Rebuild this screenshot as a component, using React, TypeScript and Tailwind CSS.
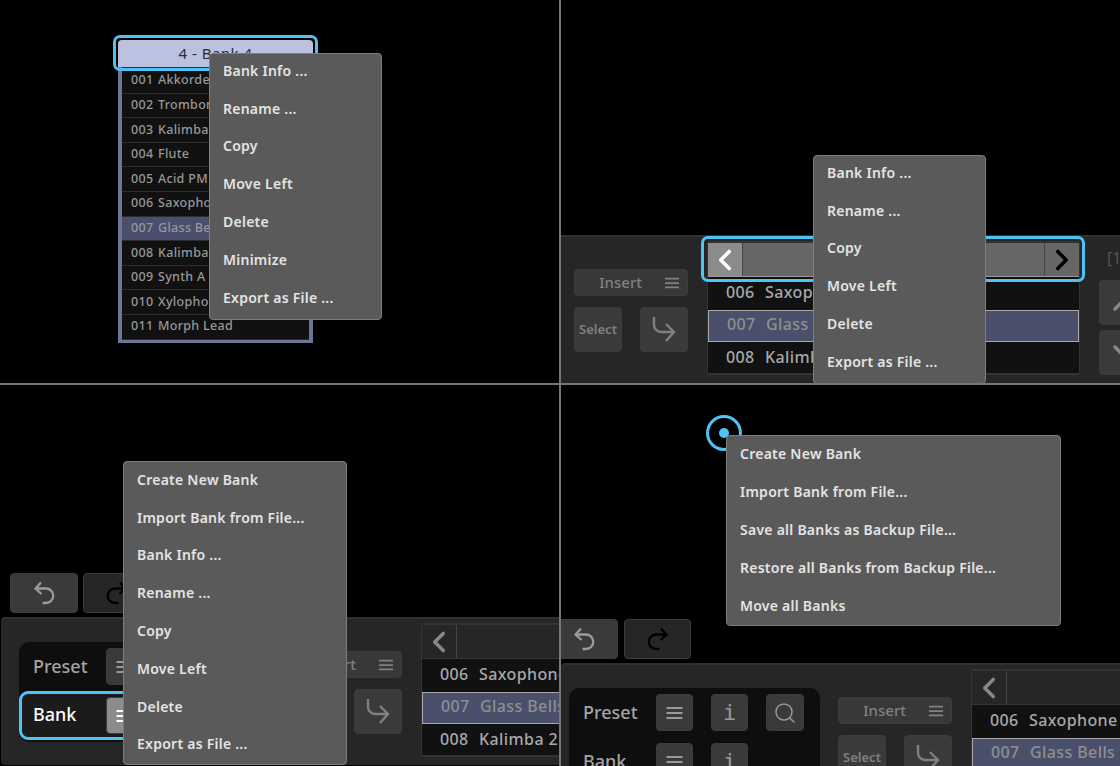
import { ChevronLeft, ChevronRight, ChevronUp, ChevronDown, Search } from "lucide-react";
import clsx from "clsx";

const bankRows = [
  ["001", "Akkordeon"],
  ["002", "Trombone"],
  ["003", "Kalimba 1"],
  ["004", "Flute"],
  ["005", "Acid PM"],
  ["006", "Saxophone"],
  ["007", "Glass Bells"],
  ["008", "Kalimba 2"],
  ["009", "Synth A 1"],
  ["010", "Xylophone"],
  ["011", "Morph Lead"],
];

function Bars({ className }: { className?: string }) {
  return (
    <svg viewBox="0 0 16 14" className={clsx("w-4 h-[14px]", className)} fill="none" stroke="currentColor" strokeWidth="2">
      <path d="M0 2h16M0 7h16M0 12h16" />
    </svg>
  );
}

function UndoIcon({ className }: { className?: string }) {
  return (
    <svg viewBox="0 0 21 24" className={clsx("h-[24px] w-[21px]", className)} fill="none" stroke="currentColor" strokeWidth="2.3">
      <path d="M7 1.5 1.5 7.500 7.500 13M1.500 7.500H12a7 7 0 0 1 0 14.500H8.500" />
    </svg>
  );
}

function InsertArrow() {
  return (
    <svg viewBox="0 0 24 25" className="h-[25px] w-[24px]" fill="none" stroke="currentColor" strokeWidth="2.4">
      <path d="M2 0v8a7 7 0 0 0 7 7h13M14 7l8 8-8 9" />
    </svg>
  );
}

function ContextMenu({ items, className, itemClass }: { items: string[]; className: string; itemClass: string }) {
  return (
    <div className={clsx("absolute z-10 rounded-[4px] border border-[#7e7e7e] bg-[#5a5a5a] text-[14px] font-semibold tracking-[0.25px] text-[#e4e4e4]", className)}>
      {items.map((item) => (
        <div key={item} className={clsx("flex h-[37.8px] items-center pl-[13px] whitespace-nowrap", itemClass)}>
          {item}
        </div>
      ))}
    </div>
  );
}

function IconButton({ children, className }: { children: React.ReactNode; className?: string }) {
  return (
    <div className={clsx("flex shrink-0 items-center justify-center rounded-[4px] border border-[#3c3c3c] bg-[#3a3a3a] text-[#9a9a9a]", className)}>
      {children}
    </div>
  );
}

function PresetPanel({ focused }: { focused?: boolean }) {
  return (
    <div className="mt-[23px] h-[100px] w-[251px] shrink-0 rounded-[10px] bg-[#0e0e0e]">
      <div className="flex h-[49px] items-center pl-[14px]">
        <span className="w-[73px] text-[18px] font-medium text-[#a4a4a4]">Preset</span>
        <IconButton className="h-[37px] w-[37px]"><Bars className="w-[17px]" /></IconButton>
        <IconButton className="ml-[18px] h-[37px] w-[37px] font-['DejaVu_Sans_Mono',monospace] text-[22px]">i</IconButton>
        <IconButton className="ml-[18px] h-[37px] w-[38px]"><Search size={24} strokeWidth={1.5} /></IconButton>
      </div>
      <div className={clsx("flex h-[49px] items-center rounded-[9px]", focused ? "border-[3px] border-[#4fc4f4] bg-[#1b1b1b] pl-[11px]" : "pl-[14px]")}>
        <span className={clsx("w-[73px] text-[18px] font-medium", focused ? "pb-[3px] text-white" : "text-[#a4a4a4]")}>Bank</span>
        <IconButton className={clsx("h-[37px] w-[37px]", focused && "bg-[#8c8c8c] text-white")}><Bars className="w-[17px]" /></IconButton>
        <IconButton className="ml-[18px] h-[37px] w-[37px] font-['DejaVu_Sans_Mono',monospace] text-[22px]">i</IconButton>
      </div>
    </div>
  );
}

function InsertColumn() {
  return (
    <div className="ml-[18px] mt-[32px] w-[114px] shrink-0">
      <div className="flex h-[27px] items-center justify-end rounded-[4px] border border-[#3c3c3c] bg-[#383838] pr-[8px] text-[15px] font-medium text-[#808080]">
        <span className="mr-[23px]">Insert</span>
        <Bars className="h-[12px] w-[14px]" />
      </div>
      <div className="mt-[11px] flex justify-between">
        <IconButton className="h-[45px] w-[48px] text-[13px] font-semibold text-[#808080]">Select</IconButton>
        <IconButton className="h-[45px] w-[48px] text-[#808080]"><InsertArrow /></IconButton>
      </div>
    </div>
  );
}

function BankList({ focused }: { focused?: boolean }) {
  return (
    <div className="relative ml-[19px] mt-[4px] h-[134px] w-[373px] shrink-0 rounded-[2px] border-x border-y-2 border-[#333] bg-[#111]">
      <div className={clsx("flex h-[34px] items-center border-b", focused ? "border-[#999] bg-[#666]" : "border-[#333] bg-[#262626]")}>
        <div className={clsx("flex h-full w-[35px] items-center justify-center border-r border-[#444]", focused ? "bg-[#8c8c8c] text-white" : "text-[#888]")}>
          <ChevronLeft size={36} strokeWidth={2.5} />
        </div>
        <div className="flex-1 pl-[34px] text-center text-[15px] text-[#aaa]">4 - Bank 4</div>
        <div className={clsx("flex h-full w-[35px] items-center justify-center border-l border-[#444]", focused ? "text-black" : "text-[#888]")}>
          <ChevronRight size={36} strokeWidth={2.5} />
        </div>
      </div>
      {bankRows.slice(5, 8).map(([num, name]) => (
        <div
          key={num}
          className={clsx(
            "flex h-[32.6px] items-center pb-[3px] pl-[18px] text-[16px] font-medium tracking-[0.4px]",
            num === "007" ? "border border-[#aaa] bg-[#4a4f6b] text-[#8f8f8f]" : "text-[#a8a8a8]",
          )}
        >
          <span className="w-[39px]">{num}</span>
          <span>{name}</span>
        </div>
      ))}
      {focused && <div className="absolute -left-[7px] -right-[6px] -top-[7px] h-[46px] rounded-[7px] border-[3px] border-[#4fc4f4]" />}
    </div>
  );
}

function PagerColumn() {
  return (
    <div className="ml-[19px] shrink-0 pt-[6px]">
      <div className="h-[37px] pl-[8px] pt-[3px] text-[16px] text-[#555]">[1</div>
      <IconButton className="h-[45px] w-[56px] text-[#888]"><ChevronUp size={48} strokeWidth={1.75} /></IconButton>
      <IconButton className="mt-[5px] h-[45px] w-[56px] text-[#888]"><ChevronDown size={48} strokeWidth={1.75} /></IconButton>
    </div>
  );
}

function Toolbar({ className, panelFocused, listFocused }: { className?: string; panelFocused?: boolean; listFocused?: boolean }) {
  return (
    <div className={clsx("flex h-[148px] shrink-0 rounded-t-[4px] border-t-2 border-[#303030] bg-[#262626]", className)}>
      <PresetPanel focused={panelFocused} />
      <InsertColumn />
      <BankList focused={listFocused} />
      <PagerColumn />
    </div>
  );
}

function UndoRedo({ className }: { className?: string }) {
  return (
    <div className={clsx("flex", className)}>
      <IconButton className="h-[40px] w-[68px]"><UndoIcon /></IconButton>
      <IconButton className="h-[40px] w-[67px] border-[#2a2a2a] bg-[#262626] text-black"><UndoIcon className="-scale-x-100" /></IconButton>
    </div>
  );
}

function BankColumn() {
  return (
    <div className="relative ml-[113px] mt-[35px] w-[205px]">
      <div className="p-[5px] pb-0">
        <div className="flex h-[27px] items-center justify-center rounded-t-[4px] bg-[#bbc2e0] text-[15px] tracking-[0.5px] text-[#2a2a35]">4 - Bank 4</div>
        <div className="border-x-[4px] border-b-[3px] border-[#6c7593] bg-[#2c2c2c] pt-[2px]">
          {bankRows.map(([num, name]) => (
            <div
              key={num}
              className={clsx(
                "flex h-[24.6px] items-center border-b border-[#2c2c2c] pl-[9px] text-[12.5px] font-medium tracking-[0.3px] text-[#989898]",
                num === "007" ? "bg-[#4a4f6e]" : "bg-[#111]",
              )}
            >
              <span className="w-[27px]">{num}</span>
              <span className="whitespace-nowrap">{name}</span>
            </div>
          ))}
        </div>
      </div>
      <div className="absolute inset-x-0 top-0 h-[36px] rounded-[7px] border-[3px] border-[#4fc4f4]" />
    </div>
  );
}

export default function App() {
  return (
    <div className="flex h-[766px] w-[1120px] flex-col overflow-hidden bg-black font-['Noto_Sans',sans-serif]">
      <div className="flex h-[383px] shrink-0">
        <section className="relative h-full w-[559px] shrink-0 overflow-hidden">
          <div className="flex">
            <BankColumn />
          </div>
          <ContextMenu
            className="left-[209px] top-[53px] w-[173px]"
            itemClass="pb-[5px]"
            items={["Bank Info ...", "Rename ...", "Copy", "Move Left", "Delete", "Minimize", "Export as File ..."]}
          />
        </section>
        <div className="w-[2px] shrink-0 bg-[#777]" />
        <section className="relative flex h-full flex-1 flex-col justify-end overflow-hidden">
          <Toolbar className="ml-[-256px] w-max" listFocused />
          <ContextMenu
            className="left-[252px] top-[155px] w-[173px]"
            itemClass="pb-[5px]"
            items={["Bank Info ...", "Rename ...", "Copy", "Move Left", "Delete", "Export as File ..."]}
          />
        </section>
      </div>
      <div className="h-[2px] shrink-0 bg-[#777]" />
      <div className="flex min-h-0 flex-1">
        <section className="relative flex h-full w-[559px] shrink-0 flex-col justify-end overflow-hidden">
          <UndoRedo className="mb-[4px] ml-[10px] gap-[5px]" />
          <Toolbar className="mb-[1px] ml-[1px] w-max rounded-b-[4px] pl-[18px]" panelFocused />
          <ContextMenu
            className="left-[123px] top-[76px] w-[224px]"
            itemClass="pb-[3px]"
            items={["Create New Bank", "Import Bank from File...", "Bank Info ...", "Rename ...", "Copy", "Move Left", "Delete", "Export as File ..."]}
          />
        </section>
        <div className="w-[2px] shrink-0 bg-[#777]" />
        <section className="relative flex h-full flex-1 flex-col justify-end overflow-hidden">
          <UndoRedo className="mb-[4px] -ml-[11px] gap-[6px]" />
          <Toolbar className="-mb-[45px] w-max pl-[8px]" />
          <div className="absolute left-[145px] top-[30px] flex h-[36px] w-[36px] items-center justify-center rounded-full border-[3px] border-[#4fc4f4]">
            <div className="h-[10px] w-[10px] rounded-full bg-[#4fc4f4]" />
          </div>
          <ContextMenu
            className="left-[165px] top-[50px] w-[335px]"
            itemClass="pb-[2px]"
            items={["Create New Bank", "Import Bank from File...", "Save all Banks as Backup File...", "Restore all Banks from Backup File...", "Move all Banks"]}
          />
        </section>
      </div>
    </div>
  );
}
